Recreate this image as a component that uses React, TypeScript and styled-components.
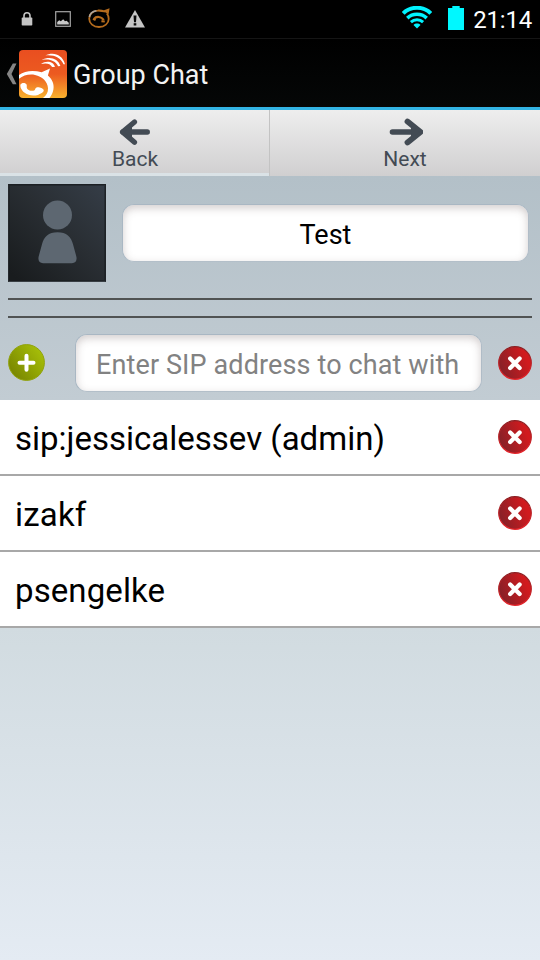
import React from "react";
import styled, { createGlobalStyle } from "styled-components";

const GlobalStyle = createGlobalStyle`
  * { box-sizing: border-box; }
  body { margin: 0; font-family: Roboto, "Noto Sans", sans-serif; }
  svg { display: block; flex: none; }
`;

const Screen = styled.div`
  width: 540px;
  height: 960px;
  display: flex;
  flex-direction: column;
  overflow: hidden;
  background: linear-gradient(#b3c0c8 176px, #c2ccd3 400px, #d1dbe0 628px, #e4ebf3 960px);
`;

const StatusBar = styled.div`
  height: 39px;
  flex: none;
  display: flex;
  align-items: center;
  padding: 0 8px 1px 21px;
  background: #000;
  border-bottom: 1px solid #151515;
`;

const Notifications = styled.div`
  display: flex;
  align-items: center;
  flex: 1;
`;

const Gap = styled.span<{ $w: number }>`
  width: ${(p) => p.$w}px;
  flex: none;
`;

const Label = styled.span<{ $size: number; $color: string; $spacing?: number; $drop?: number }>`
  font-size: ${(p) => p.$size}px;
  line-height: ${(p) => Math.round(p.$size * 1.2)}px;
  color: ${(p) => p.$color};
  letter-spacing: ${(p) => p.$spacing ?? 0}px;
  padding-top: ${(p) => p.$drop ?? 0}px;
  white-space: nowrap;
`;

const ActionBar = styled.header`
  height: 71px;
  flex: none;
  display: flex;
  align-items: center;
  padding: 2px 0 0 6px;
  background: linear-gradient(#000, #050707);
  border-bottom: 3px solid #33b5e5;
`;

const Tabs = styled.nav`
  height: 66px;
  flex: none;
  display: grid;
  grid-template-columns: 270px 270px;
`;

const Tab = styled.button<{ $left?: boolean }>`
  display: flex;
  flex-direction: column;
  align-items: center;
  border: 0;
  padding: 7px 0 0;
  font-family: inherit;
  background: linear-gradient(#eeeeee, #d0cfd0);
  ${(p) =>
    p.$left &&
    "padding-left: 1px; border-right: 1px solid #c3c3c3; box-shadow: inset 0 -3px #dae2e6;"}
`;

const GroupHeader = styled.section`
  height: 122px;
  flex: none;
  display: flex;
  align-items: flex-start;
  padding: 8px 11px 0 8px;
`;

const Avatar = styled.div`
  width: 98px;
  height: 98px;
  flex: none;
  border: 1px solid;
  border-color: #1c2024 #1e2226 #383e43 #24282c;
  box-shadow: inset 0 0 0 1px rgba(20, 24, 27, 0.4);
  background: linear-gradient(45deg, #191c1e 5%, #292e33 55%, #353d47);
`;

const Field = styled.div<{ $margin: string; $align: string }>`
  height: 58px;
  width: 407px;
  flex: none;
  margin: ${(p) => p.$margin};
  display: flex;
  align-items: center;
  justify-content: ${(p) => p.$align};
  padding: 0 20px;
  border: 1px solid #a9b7c3;
  border-right-color: #b0bcc7;
  border-bottom-color: #b3bfc9;
  border-radius: 12px;
  background: #fff;
  box-shadow: inset 0 3px 8px rgba(80, 60, 60, 0.26);
`;

const Rule = styled.hr`
  width: 524px;
  height: 2px;
  flex: none;
  border: 0;
  margin: 0 8px 16px;
  background: #505353;
`;

const AddRow = styled.section`
  height: 66px;
  flex: none;
  display: flex;
  align-items: flex-start;
  padding-left: 8px;
`;

const IconSlot = styled.div<{ $top: number; $left?: number }>`
  margin: ${(p) => p.$top}px 0 0 ${(p) => p.$left ?? 0}px;
  flex: none;
`;

const List = styled.ul`
  margin: 0;
  padding: 0;
  list-style: none;
`;

const Row = styled.li`
  height: 76px;
  display: flex;
  align-items: center;
  justify-content: space-between;
  padding: 0 8px 0 15px;
  background: #fff;
  border-bottom: 2px solid #a8a8a8;
`;

const LockIcon = () => (
  <svg width="12" height="14" viewBox="0 0 12 14">
    <path d="M3 6V3.8a3 3 0 0 1 6 0V6" fill="none" stroke="#c4c4c4" strokeWidth="1.6" />
    <rect x="0.7" y="5.6" width="10.6" height="8" rx="0.8" fill="#c4c4c4" />
  </svg>
);

const PictureIcon = () => (
  <svg width="16" height="16" viewBox="0 0 16 16">
    <rect x="0.7" y="0.7" width="14.6" height="14.6" fill="none" stroke="#a4a4a4" strokeWidth="1.2" />
    <path d="M2.2 13.5V11l2-1.8 1.6 1 2.4-2 1.8 2 1.6-.5 2.2 2v1.8z" fill="#c8c8c8" />
  </svg>
);

const CallIcon = () => (
  <svg width="23" height="21" viewBox="0 0 23 21" fill="none">
    <path d="M10 2.6C4.5 2.7 1.2 6.2 1.2 10.7c0 4.6 4.2 8.3 9.8 8.3s9.7-3.7 9.7-8.1c0-2.3-.7-4-1.9-5.4" stroke="#b46b1d" strokeWidth="1.8" />
    <path d="M21.6.2L20.5 6.8 17.8 4.6 9.8 3.6 10 1.6c2.2-.2 4.400.1 6 .7z" fill="#b46b1d" />
    <path d="M1.4 9c.5-3 3-5.5 7-6.2" stroke="#aaa5a0" strokeWidth="1.6" />
    <path d="M6 10.9c2.2-2.9 7.6-2.6 9.6 1.3" stroke="#b46b1d" strokeWidth="2.2" />
    <path d="M5 10.9l2.6 1.3M13.4 13.2l3.4.2" stroke="#b46b1d" strokeWidth="2" />
  </svg>
);

const WarningIcon = () => (
  <svg width="20" height="18" viewBox="0 0 20 18">
    <path d="M10 0L20 17.5H0z" fill="#c5c5c5" />
    <path d="M8.5 5.5h3L11 12.3H9z" fill="#080808" />
    <rect x="8.7" y="13.2" width="2.6" height="2.3" fill="#080808" />
  </svg>
);

const WifiIcon = () => (
  <svg width="30" height="23" viewBox="0 0 30 23" fill="none" stroke="#00f3ff">
    <path d="M1.2 7.4C8.5-.1 21.5-.1 28.8 7.4" strokeWidth="4" />
    <path d="M5.3 12.1c5.3-5.1 14.1-5.1 19.4 0" strokeWidth="3.6" />
    <path d="M8.9 16.1c3.4-3.2 8.8-3.2 12.2 0" strokeWidth="3" />
    <path d="M11.5 18.9L15 22.6l3.5-3.7c-1.9-1.8-5.1-1.8-7 0z" fill="#00f3ff" stroke="none" />
  </svg>
);

const BatteryIcon = () => (
  <svg width="16" height="24" viewBox="0 0 16 24">
    <path d="M4.3 0h7.4v2H16v22H0V2h4.3z" fill="#00f8ff" />
  </svg>
);

const UpIcon = () => (
  <svg width="13" height="24" viewBox="0 0 13 24">
    <path d="M6.8 1.5h3.7L5.5 12l5 10.3H6.8L.8 12z" fill="#858585" />
  </svg>
);

const AppIcon = () => (
  <svg width="48" height="48" viewBox="0 0 48 48">
    <defs>
      <linearGradient id="appFill" x1="0" y1="0" x2="0" y2="1">
        <stop offset="0" stopColor="#e94e20" />
        <stop offset="0.5" stopColor="#ec5a20" />
        <stop offset="1" stopColor="#f8b22e" />
      </linearGradient>
      <clipPath id="appClip">
        <rect width="48" height="48" rx="4" />
      </clipPath>
    </defs>
    <g clipPath="url(#appClip)">
      <rect width="48" height="48" fill="url(#appFill)" />
      <path d="M26.3 5.5C34 1.4 43.5 4.4 46 14.2h-1.5C41.4 7.6 35.5 4.7 26.3 5.5z" fill="#fff" />
      <path d="M22.6 9.9c7.7-4 16.4-1.9 18.8 6.100l-2.3.2c-2.900-5.700-8.200-7.600-16.500-6.300z" fill="#fff" />
      <path d="M22 14.1c5.300-4 12.700-2.500 13.900 2.900l-2.8.1c-2-3.500-5.600-4.300-11.100-3z" fill="#fff" />
      <path d="M0 24.9C6 20.600 14.500 20 22.600 22.300L31 18.600 28.900 25.500C33.300 29.300 35.400 34.500 34.400 39.500 33.800 42.800 32.300 45.800 30.400 48H24C27.300 45.800 29.200 42.300 29 38.300 28.700 31.300 23 26.200 16 24.900 10.300 23.800 4.300 25.200 0 28.800z" fill="#fff" />
      <path d="M1.5 34.500C2.300 32.600 6 32.300 7.300 34.100 8.400 35.700 7.300 37.100 8 38.400 9.500 40.800 12.800 41.300 15.200 40.400 16.700 39.700 15.700 38.100 17.500 37.400 19.700 36.700 24.200 38.100 24.700 40.100 25.100 42.100 22.300 43.800 19 44.900 14.300 46.300 9.200 45.500 5.700 42.800 2.700 40.600.8 37 1.500 34.500z" fill="#fff" />
    </g>
  </svg>
);

const BackArrow = () => (
  <svg width="32" height="30" viewBox="0 0 32 30" fill="none" stroke="#434b54" strokeLinecap="round" strokeLinejoin="round">
    <path d="M4 15H28.300" strokeWidth="5.300" />
    <path d="M15.500 5L3.500 15l12 10.200" strokeWidth="5.200" />
    <path d="M5 15l7.500-6v12z" fill="#434b54" strokeWidth="1" />
  </svg>
);

const NextArrow = () => (
  <svg width="36" height="30" viewBox="0 0 36 30" fill="none" stroke="#434b54" strokeLinecap="round" strokeLinejoin="round">
    <path d="M5.500 15h25" strokeWidth="5.600" />
    <path d="M20.500 4.600L33.500 15l-13 10.400" strokeWidth="5.800" />
    <path d="M32.500 15l-8-6v12z" fill="#434b54" strokeWidth="1" />
  </svg>
);

const PersonIcon = () => (
  <svg width="96" height="96" viewBox="0 0 96 96" fill="#5d6771">
    <circle cx="48.5" cy="30" r="14.5" />
    <path d="M48.500 47.300c9 0 13.700 4.700 15.500 12l3.400 12.400c.8 4.300-1 6.500-4.400 6.500H34c-3.400 0-5.200-2.200-4.400-6.500L33 59.300c1.800-7.300 6.500-12 15.500-12z" />
  </svg>
);

const AddIcon = () => (
  <svg width="38" height="38" viewBox="0 0 38 38">
    <defs>
      <linearGradient id="addFill" x1="0" y1="0.9" x2="0.9" y2="0.2">
        <stop offset="0" stopColor="#748000" />
        <stop offset="1" stopColor="#a5bd08" />
      </linearGradient>
    </defs>
    <circle cx="18.5" cy="18.5" r="17.9" fill="url(#addFill)" stroke="#91a30c" strokeWidth="1" />
    <path d="M18.500 11.800v14M11.500 18.800h14" stroke="#fff" strokeWidth="4" strokeLinecap="round" />
  </svg>
);

const RemoveIcon = () => (
  <svg width="34" height="34" viewBox="0 0 34 34">
    <defs>
      <linearGradient id="removeFill" x1="0" y1="0.7" x2="1" y2="0.3">
        <stop offset="0.1" stopColor="#8c2027" />
        <stop offset="0.85" stopColor="#d11a1e" />
      </linearGradient>
      <linearGradient id="removeEdge" x1="0" y1="0" x2="0" y2="1">
        <stop offset="0" stopColor="#8b2023" />
        <stop offset="1" stopColor="#e8242a" />
      </linearGradient>
    </defs>
    <circle cx="17" cy="17" r="16.3" fill="url(#removeFill)" stroke="url(#removeEdge)" strokeWidth="1.2" />
    <path d="M12.200 12.500l9.400 9.400M21.600 12.500l-9.400 9.400" stroke="#fff" strokeWidth="4.300" strokeLinecap="round" />
  </svg>
);

const members = [
  { name: "sip:jessicalessev (admin)", spacing: 0 },
  { name: "izakf", spacing: 0.2 },
  { name: "psengelke", spacing: 0.1 },
];

export default function App() {
  return (
    <>
      <GlobalStyle />
      <Screen>
        <StatusBar>
          <Notifications>
            <LockIcon />
            <Gap $w={22} />
            <PictureIcon />
            <Gap $w={17} />
            <CallIcon />
            <Gap $w={14} />
            <WarningIcon />
          </Notifications>
          <IconSlot $top={-3}>
            <WifiIcon />
          </IconSlot>
          <Gap $w={16} />
          <IconSlot $top={-1}>
            <BatteryIcon />
          </IconSlot>
          <Gap $w={9} />
          <Label $size={24} $color="#fff" $drop={3} $spacing={-0.2}>21:14</Label>
        </StatusBar>
        <ActionBar>
          <UpIcon />
          <AppIcon />
          <Gap $w={6} />
          <Label $size={27} $color="#f3f3f3" $drop={2}>Group Chat</Label>
        </ActionBar>
        <Tabs>
          <Tab $left>
            <BackArrow />
            <Label $size={21} $color="#434b54">Back</Label>
          </Tab>
          <Tab>
            <NextArrow />
            <Label $size={21} $color="#434b54">Next</Label>
          </Tab>
        </Tabs>
        <GroupHeader>
          <Avatar>
            <PersonIcon />
          </Avatar>
          <Field $margin="20px 0 0 16px" $align="center">
            <Label $size={27} $color="#000" $drop={4}>Test</Label>
          </Field>
        </GroupHeader>
        <Rule />
        <Rule />
        <AddRow>
          <IconSlot $top={10}>
            <AddIcon />
          </IconSlot>
          <Field $margin="0 0 0 29px" $align="flex-start">
            <Label $size={27} $color="#828282" $spacing={0.12} $drop={4}>Enter SIP address to chat with</Label>
          </Field>
          <IconSlot $top={12} $left={16}>
            <RemoveIcon />
          </IconSlot>
        </AddRow>
        <List>
          {members.map((m) => (
            <Row key={m.name}>
              <Label $size={33} $color="#000" $spacing={m.spacing} $drop={4}>{m.name}</Label>
              <RemoveIcon />
            </Row>
          ))}
        </List>
      </Screen>
    </>
  );
}
